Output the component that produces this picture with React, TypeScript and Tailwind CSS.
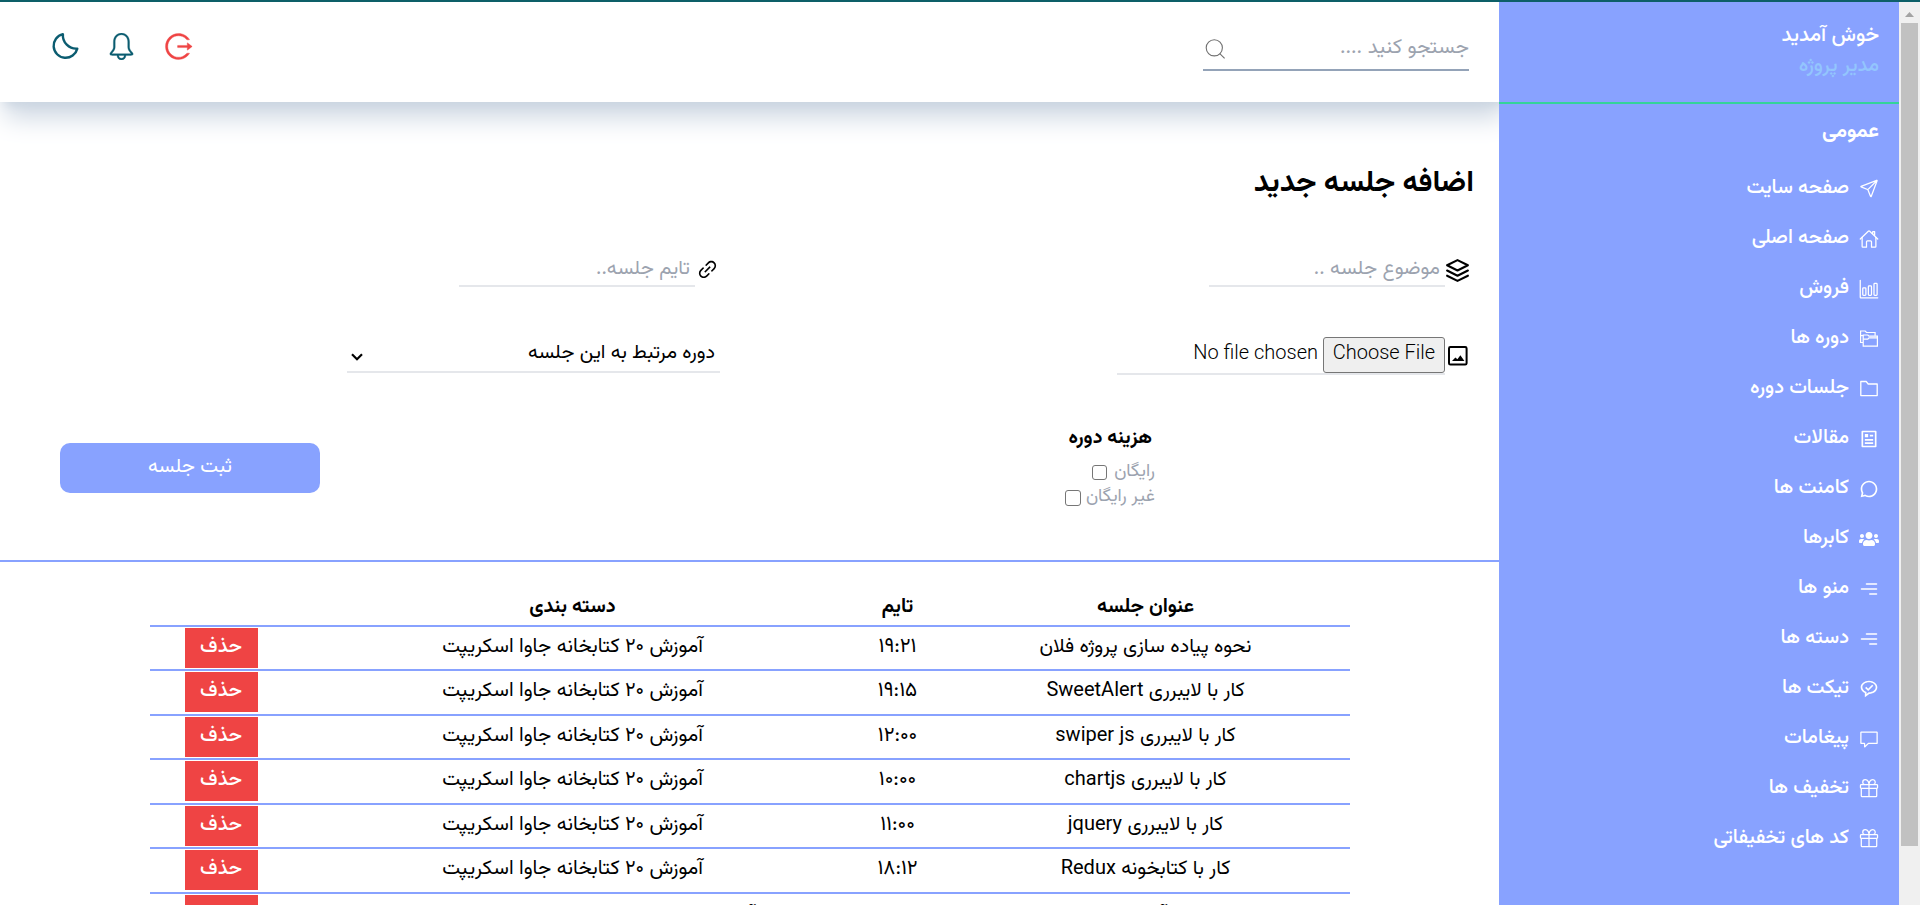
import type { ReactNode } from "react";
import { AiOutlineLink, AiOutlineLogout } from "react-icons/ai";
import { BiMessageRoundedCheck } from "react-icons/bi";
import { CgMenuRight } from "react-icons/cg";
import { FaUsers } from "react-icons/fa";
import { FiLayers } from "react-icons/fi";
import { GoGift } from "react-icons/go";
import { IoBarChartOutline, IoHomeOutline, IoPaperPlaneOutline } from "react-icons/io5";
import { RiArticleLine, RiChat3Line } from "react-icons/ri";
import { SlBell } from "react-icons/sl";
import { VscComment } from "react-icons/vsc";

function FoldersIcon() {
  return (
    <svg width="20" height="20" viewBox="0 0 20 20" fill="none" stroke="currentColor" strokeWidth="1.2">
      <path d="M4 13.5H1.6V2h4.6l1.3 1.5h8.6v3.2" />
      <path d="M1.6 6.6h2.6" />
      <path d="M4.2 6h4.6l1.2 1.2h8.4v9.9H4.2z" />
      <path d="M4.2 10.2h4.6l1.2-1.3h8.4" />
    </svg>
  );
}

function FolderIcon() {
  return (
    <svg width="20" height="20" viewBox="0 0 20 20" fill="none" stroke="currentColor" strokeWidth="1.3" strokeLinejoin="round">
      <path d="M1.8 2.5h5.4l2 2.5h9v11.6H1.8z" />
    </svg>
  );
}

function MoonIcon() {
  return (
    <svg width="30" height="30" viewBox="0 0 30 30" fill="none" stroke="currentColor" strokeWidth="2.4" strokeLinejoin="round">
      <path d="M12.9 3.1A12 12 0 1 0 27.3 17.6A13.4 13.4 0 0 1 12.9 3.1z" />
    </svg>
  );
}

function SearchIcon() {
  return (
    <svg width="20" height="20" viewBox="0 0 20 20" fill="none" stroke="#707070" strokeWidth="1.1">
      <circle cx="9.3" cy="8.8" r="8.1" />
      <path d="M14.8 14.6l4.8 4.7" />
    </svg>
  );
}

function PictureIcon() {
  return (
    <svg width="24" height="24" viewBox="0 0 24 24" fill="none" stroke="currentColor" strokeWidth="2">
      <rect x="3" y="3" width="17.6" height="17.6" rx="1.4" />
      <path d="M6 17l3.4-3.6 2 1.8 3-4 4 5.8z" fill="currentColor" stroke="none" />
    </svg>
  );
}

const menu: { label: string; icon: ReactNode }[] = [
  { label: "صفحه سایت", icon: <IoPaperPlaneOutline size={21} /> },
  { label: "صفحه اصلی", icon: <IoHomeOutline size={20} /> },
  { label: "فروش", icon: <IoBarChartOutline size={20} /> },
  { label: "دوره ها", icon: <FoldersIcon /> },
  { label: "جلسات دوره", icon: <FolderIcon /> },
  { label: "مقالات", icon: <RiArticleLine size={20} /> },
  { label: "کامنت ها", icon: <RiChat3Line size={20} /> },
  { label: "کابرها", icon: <FaUsers size={20} /> },
  { label: "منو ها", icon: <CgMenuRight size={20} /> },
  { label: "دسته ها", icon: <CgMenuRight size={20} /> },
  { label: "تیکت ها", icon: <BiMessageRoundedCheck size={20} /> },
  { label: "پیغامات", icon: <VscComment size={20} /> },
  { label: "تخفیف ها", icon: <GoGift size={20} /> },
  { label: "کد های تخفیفاتی", icon: <GoGift size={20} /> },
];

const category = "آموزش ۲۰ کتابخانه جاوا اسکریپت";

const sessions = [
  { title: "نحوه پیاده سازی پروژه فلان", time: "۱۹:۲۱", category },
  { title: "کار با لایبرری SweetAlert", time: "۱۹:۱۵", category },
  { title: "کار با لایبرری swiper js", time: "۱۲:۰۰", category },
  { title: "کار با لایبرری chartjs", time: "۱۰:۰۰", category },
  { title: "کار با لایبرری jquery", time: "۱۱:۰۰", category },
  { title: "کار با کتابخونه Redux", time: "۱۸:۱۲", category },
];

function Header() {
  return (
    <header className="relative -mr-[10px] flex h-[100px] shrink-0 justify-between bg-white pr-[40px] pl-[50px] shadow-xl shadow-[#cbd5e1]">
      <div className="flex h-[69px] w-[266px] items-center justify-between self-start border-b-2 border-[#94a3b8] pt-[25px] text-[20.5px] leading-[44px] text-[#9ca3af]">
        <span>جستجو کنید ....</span>
        <span className="mt-[2px] mr-auto pl-[2px]">
          <SearchIcon />
        </span>
      </div>
      <div className="flex gap-[26px] pt-[29px] text-[#0b5c70]">
        <AiOutlineLogout size={31} className="text-[#ef4444]" stroke="currentColor" strokeWidth={12} />
        <SlBell size={27} className="mt-[2px] mr-[2px] ml-[2px]" stroke="currentColor" strokeWidth={12} />
        <MoonIcon />
      </div>
    </header>
  );
}

function Sidebar() {
  return (
    <aside dir="rtl" className="relative flex w-[400px] shrink-0 flex-col bg-[#88a2ff] text-[20px] font-medium text-white">
      <div className="flex h-[102px] flex-col border-b-2 border-[#34d399] pt-[19px] pr-[20px] leading-[30px]">
        <span className="text-[20.5px]">خوش آمدید</span>
        <span className="text-[#93c5fd]">مدیر پروژه</span>
      </div>
      <div className="pt-[13px] pr-[20px] text-[20.5px] leading-[30px] font-bold">عمومی</div>
      <nav className="flex flex-col pt-[15px]">
        {menu.map((item) => (
          <a key={item.label} className="flex h-[50px] items-center pr-[20px]">
            <span className="mt-[3px] flex w-[20px]">{item.icon}</span>
            <span className="mt-[2px] mr-[10px]">{item.label}</span>
          </a>
        ))}
      </nav>
    </aside>
  );
}

function Field({ icon, placeholder }: { icon: ReactNode; placeholder: string }) {
  return (
    <div className="flex pr-[29px]">
      <span className="flex w-[25px] justify-center pt-[14px]">{icon}</span>
      <span className="h-[43px] w-[236px] border-b-2 border-[#e5e7eb] pr-[5px] text-[20px] leading-[50px] text-[#9ca3af]">
        {placeholder}
      </span>
    </div>
  );
}

function SessionForm() {
  return (
    <section className="flex h-[460px] shrink-0 flex-col border-b-2 border-[#88a2ff]">
      <h1 className="pt-[62px] pr-[25px] text-[30px] leading-[40px] font-bold">اضافه جلسه جدید</h1>
      <div className="mt-[40px] grid h-[43px] grid-cols-[750px_749px]">
        <Field icon={<FiLayers size={25} />} placeholder="موضوع جلسه .." />
        <Field icon={<AiOutlineLink size={23} />} placeholder="تایم جلسه.." />
      </div>
      <div className="mt-[50px] grid h-[38px] grid-cols-[750px_749px]">
        <div className="flex pr-[29px]">
          <span className="flex w-[25px] justify-center pt-[7px]">
            <PictureIcon />
          </span>
          <div className="flex h-[38px] w-[328px] border-b-2 border-[#e5e7eb] font-['Roboto'] text-[20px] font-light">
            <button className="h-[36px] w-[122px] rounded-[3px] border border-[#767676] bg-[#efefef] pb-[6px] leading-[28px]">
              Choose File
            </button>
            <span className="mr-[5px] leading-[30px]">No file chosen</span>
          </div>
        </div>
        <div className="flex pr-[29px]">
          <div className="flex h-[36px] w-[373px] items-center justify-between border-b-2 border-[#e5e7eb] pr-[5px] pl-[4px] text-[19.8px]">
            <span className="leading-[30px]">دوره مرتبط به این جلسه</span>
            <svg width="12" height="8" viewBox="0 0 12 8" fill="none" stroke="black" strokeWidth="2.2" className="mt-[6px]">
              <path d="M1 1.2l5 5 5-5" />
            </svg>
          </div>
        </div>
      </div>
      <div className="flex justify-between pr-[345px] pl-[60px]">
        <div className="flex flex-col pt-[48px]">
          <span className="pr-[2px] text-[19.5px] leading-[30px] font-bold">هزینه دوره</span>
          <label className="mt-[6px] flex h-[25px] items-center text-[18px] text-[#9ca3af]">
            <span className="mt-px -mr-px">رایگان</span>
            <span className="mt-px mr-[7px] h-[15px] w-[15px] rounded-[3px] border border-[#767676]" />
          </label>
          <label className="flex h-[25px] items-center text-[18px] text-[#9ca3af]">
            <span className="mt-px -mr-px">غیر رایگان</span>
            <span className="mt-[2px] mr-[5px] h-[16px] w-[16px] rounded-[3px] border border-[#767676]" />
          </label>
        </div>
        <button className="mt-[68px] h-[50px] w-[260px] rounded-[10px] bg-[#88a2ff] pb-[2px] text-[20px] text-white">
          ثبت جلسه
        </button>
      </div>
    </section>
  );
}

function SessionTable() {
  return (
    <section className="mx-auto mt-[30px] flex w-[1200px] flex-col text-center text-[20px]">
      <div className="grid h-[35px] grid-cols-[408px_88px_562px_142px] border-b-2 border-[#88a2ff] text-[19.8px] leading-[32px] font-bold">
        <span>عنوان جلسه</span>
        <span>تایم</span>
        <span>دسته بندی</span>
      </div>
      {sessions.map((s) => (
        <div
          key={s.title}
          className="grid grid-cols-[408px_88px_562px_142px] border-b-2 border-[#88a2ff] leading-[41px] even:h-[44px] odd:h-[45px]"
        >
          <span>{s.title}</span>
          <span className="text-[20.5px]">{s.time}</span>
          <span className="text-[20.1px]">{s.category}</span>
          <span className="mt-px mr-[34px] h-[40px] w-[73px] bg-[#ef4444] leading-[38px] font-medium text-white">حذف</span>
        </div>
      ))}
      <div className="grid grid-cols-[408px_88px_562px_142px] leading-[42px]">
        <span>جلسه اول آموزش RegExp</span>
        <span />
        <span>آموزش RegExp به زبان ساده در جاوا اسکریپت</span>
        <span className="mt-px mr-[34px] h-[40px] w-[73px] bg-[#ef4444]" />
      </div>
    </section>
  );
}

function ScrollBar() {
  return (
    <div className="relative flex w-[21px] shrink-0 flex-col items-center bg-[#f0f0f0]">
      <span className="flex h-[21px] items-center">
        <svg width="9" height="5" viewBox="0 0 9 5" fill="#a3a3a3" className="mt-[3px]">
          <path d="M4.5 0L9 5H0z" />
        </svg>
      </span>
      <span className="h-[823px] w-[17px] bg-[#c1c1c1]" />
    </div>
  );
}

export default function App() {
  return (
    <div className="flex h-[905px] w-[1920px] flex-col overflow-hidden bg-white font-['Vazirmatn','Noto_Sans','DejaVu_Sans',sans-serif] text-black">
      <div className="h-[2px] shrink-0 bg-[#0d5f68]" />
      <div className="flex min-h-0 flex-1">
        <main dir="rtl" className="flex w-[1499px] shrink-0 flex-col overflow-hidden">
          <Header />
          <SessionForm />
          <SessionTable />
        </main>
        <Sidebar />
        <ScrollBar />
      </div>
    </div>
  );
}
